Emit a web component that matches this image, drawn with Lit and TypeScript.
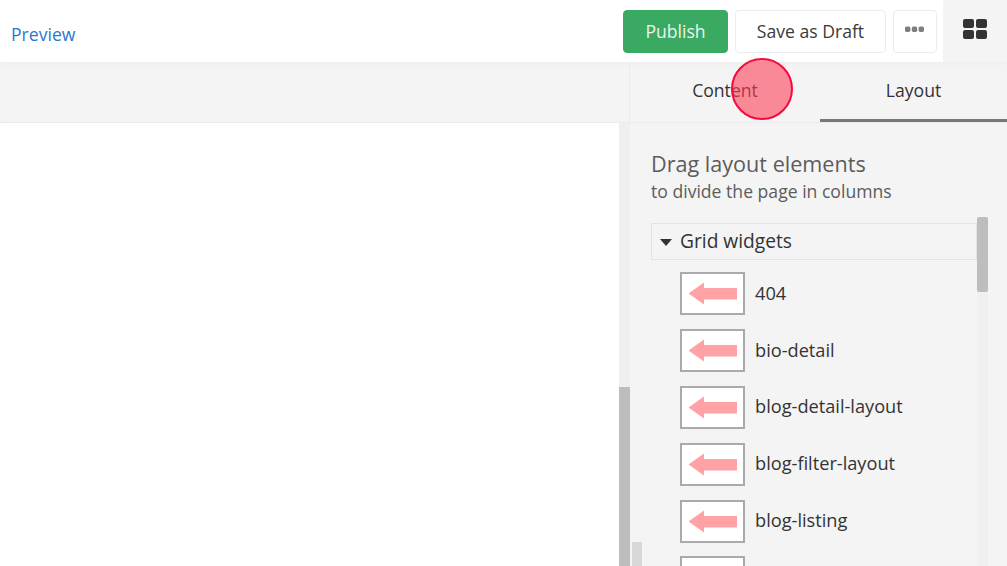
import { LitElement, html, css } from "lit";
import { customElement } from "lit/decorators.js";

const items = ["404", "bio-detail", "blog-detail-layout", "blog-filter-layout", "blog-listing", ""];

@customElement("app-root")
export class AppRoot extends LitElement {
  static styles = css`
    :host {
      display: flex;
      flex-direction: column;
      position: relative;
      width: 1007px;
      height: 566px;
      overflow: hidden;
      background: #fff;
      font-family: "Open Sans", sans-serif;
      color: #333;
    }
    .top { display: flex; height: 62px; flex: none; align-items: stretch; }
    .preview { color: #2b78c9; font-size: 17.6px; padding: 22px 0 0 11px; line-height: 25px; }
    .actions { margin-left: auto; display: flex; gap: 7px; padding-top: 10px; padding-right: 6px; align-items: flex-start; }
    .btn {
      box-sizing: border-box; height: 43px; border-radius: 4px; font-size: 17.6px; padding-bottom: 2px;
      display: flex; align-items: center; justify-content: center;
      border: 1px solid #ececec; background: #fff; color: #3a3a3a;
    }
    .publish { width: 105px; background: #3aa962; border-color: #3aa962; color: #e9f6ee; }
    .draft { width: 151px; }
    .more { width: 44px; padding-bottom: 4px; padding-right: 2px; }
    .grid-btn { width: 64px; background: #f4f4f4; display: flex; align-items: center; justify-content: center; padding-bottom: 4px; box-sizing: border-box; }
    .bar { display: flex; height: 61px; flex: none; background: #f4f4f4; border-bottom: 1px solid #ebebeb; box-sizing: border-box; box-shadow: inset 0 4px 4px -3px #ececec; }
    .bar-left { width: 630px; border-right: 1px solid #ececec; box-sizing: border-box; }
    .tab { font-size: 17.6px; display: flex; align-items: center; justify-content: center; color: #333; box-sizing: border-box; padding-bottom: 4px; }
    .tab.content { width: 190px; }
    .tab.layout { width: 187px; border-bottom: 3px solid #777; padding-bottom: 2px; }
    .body { display: flex; flex: 1; min-height: 0; }
    .canvas { width: 619px; background: #fff; }
    .track { width: 11px; background: #efefef; padding-top: 264px; box-sizing: border-box; }
    .thumb { height: 100%; background: #bdbdbd; }
    .panel { flex: 1; background: #f4f4f4; display: flex; min-width: 0; }
    .side { width: 21px; flex: none; padding: 419px 0 0 2px; box-sizing: border-box; }
    .side i { display: block; width: 10px; height: 30px; background: #d8d8d8; }
    .main { width: 337px; flex: none; overflow: hidden; }
    h2 { margin: 26px 0 0; font-weight: 400; font-size: 21.6px; line-height: 29px; color: #5c5c5c; }
    p { margin: 0; font-size: 17.6px; line-height: 26px; color: #5c5c5c; }
    .scroller { display: flex; margin-top: 13px; }
    .list { width: 326px; flex: none; padding-top: 6px; }
    .group {
      box-sizing: border-box; height: 37px; border: 1px solid #e3e3e3; display: flex; align-items: center;
      gap: 8px; padding-left: 8px; padding-bottom: 2px; font-size: 19.2px; color: #333;
    }
    .caret { width: 0; height: 0; border-left: 6.5px solid transparent; border-right: 6.5px solid transparent; border-top: 7px solid #333; margin-top: 4px; }
    .item {
      display: flex; align-items: center; gap: 10px; height: 56.8px; margin-left: 24px; padding-left: 5px;
      width: 270px; box-sizing: border-box; font-size: 18.2px; color: #333; border-bottom: 1px solid #f1f1f1;
    }
    .label { padding-bottom: 2px; }
    .items { padding-top: 6px; }
    .thumbnail {
      box-sizing: border-box; width: 65px; height: 43px; flex: none; background: #fff; border: 2px solid #aaa;
      display: flex; align-items: center; justify-content: center;
    }
    .sb { width: 11px; height: 400px; background: #f0f0f0; flex: none; }
    .sb i { display: block; height: 75px; background: #bdbdbd; border-radius: 2px; }
    .dot {
      position: absolute; left: 731px; top: 58px; width: 62px; height: 62px; box-sizing: border-box;
      border-radius: 50%; border: 2px solid #f5093e; background: rgba(255, 60, 85, 0.58);
    }
  `;

  render() {
    return html`
      <div class="top">
        <div class="preview">Preview</div>
        <div class="actions">
          <div class="btn publish">Publish</div>
          <div class="btn draft">Save as Draft</div>
          <div class="btn more">
            <svg width="19" height="7" viewBox="0 0 19 7"><g fill="#7f7f7f"><rect x="0" y="0.5" width="5.4" height="5.4" rx="1.6"/><rect x="6.8" y="0.5" width="5.4" height="5.4" rx="1.6"/><rect x="13.6" y="0.5" width="5.4" height="5.4" rx="1.6"/></g></svg>
          </div>
        </div>
        <div class="grid-btn">
          <svg width="24" height="20" viewBox="0 0 24 20"><g fill="#333"><rect x="0" y="0" width="11" height="9" rx="2"/><rect x="13" y="0" width="11" height="9" rx="2"/><rect x="0" y="11" width="11" height="9" rx="2"/><rect x="13" y="11" width="11" height="9" rx="2"/></g></svg>
        </div>
      </div>
      <div class="bar">
        <div class="bar-left"></div>
        <div class="tab content">Content</div>
        <div class="tab layout">Layout</div>
      </div>
      <div class="body">
        <div class="canvas"></div>
        <div class="track"><div class="thumb"></div></div>
        <div class="panel">
          <div class="side"><i></i></div>
          <div class="main">
            <h2>Drag layout elements</h2>
            <p>to divide the page in columns</p>
            <div class="scroller">
              <div class="list">
                <div class="group"><span class="caret"></span>Grid widgets</div>
                <div class="items">
                  ${items.map(
                    (t) => html`<div class="item">
                      <div class="thumbnail">
                        <svg width="50" height="23" viewBox="0 0 50 23"><path d="M0.5 11.5 L16 0.5 V6 H49 V17.5 H16 V22.5 Z" fill="#ffa2a6"/></svg>
                      </div>
                      <span class="label">${t}</span>
                    </div>`
                  )}
                </div>
              </div>
              <div class="sb"><i></i></div>
            </div>
          </div>
        </div>
      </div>
      <div class="dot"></div>
    `;
  }
}
